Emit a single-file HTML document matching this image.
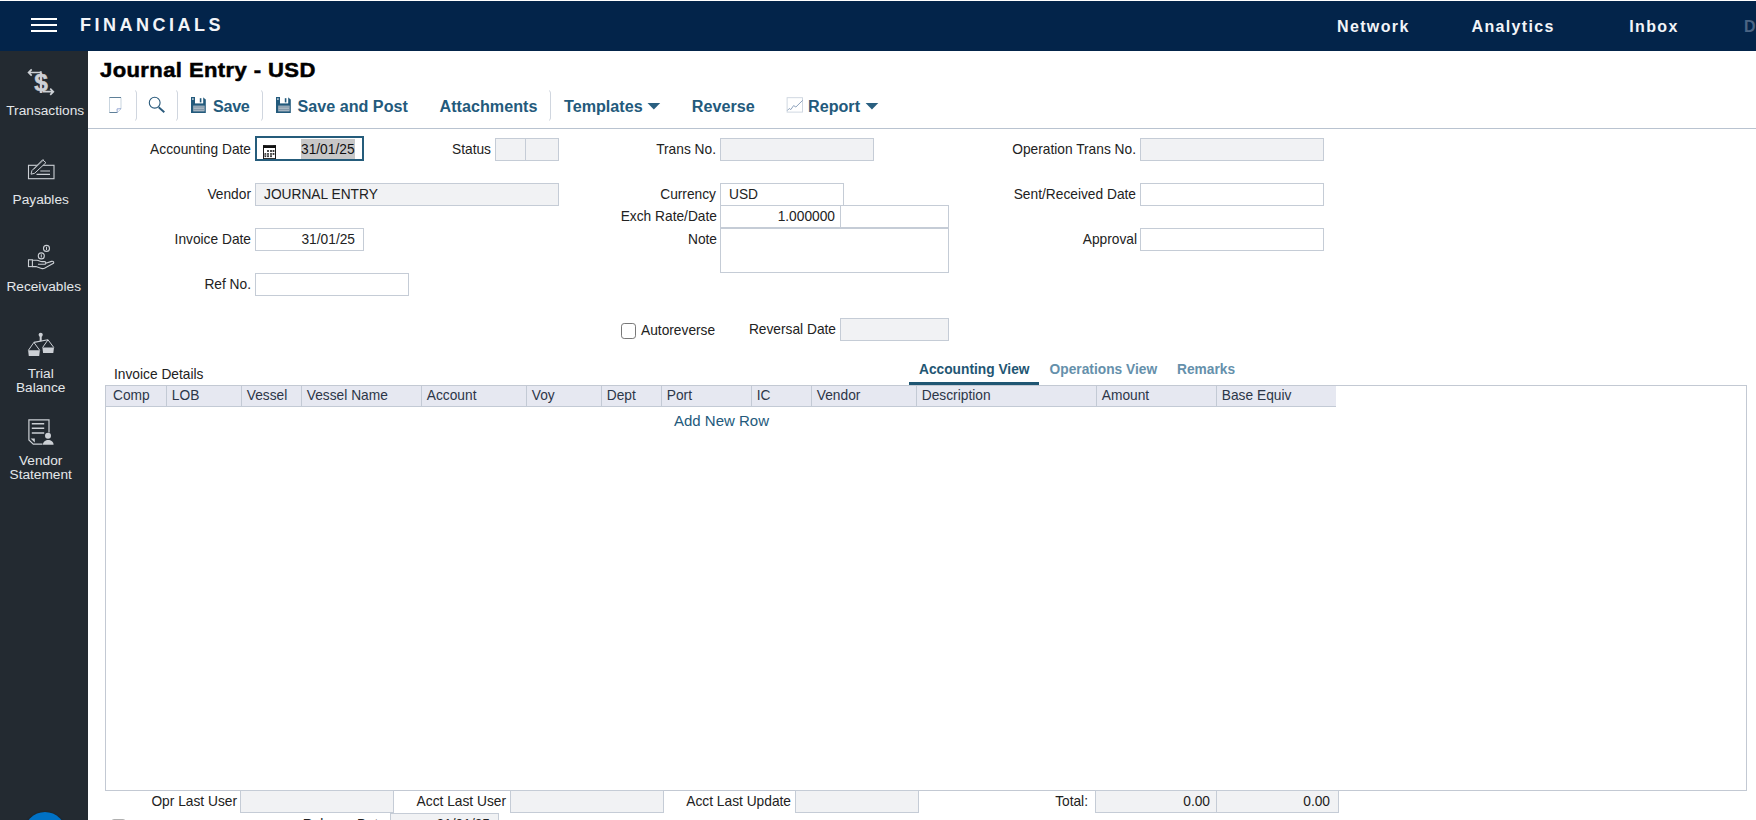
<!DOCTYPE html>
<html>
<head>
<meta charset="utf-8">
<title>Journal Entry - USD</title>
<style>
*{box-sizing:border-box;margin:0;padding:0}
html,body{width:1756px;height:820px;overflow:hidden;background:#fff}
body{font-family:"Liberation Sans",sans-serif;font-size:14px;color:#222;position:relative}
.abs{position:absolute}
#topbar{position:absolute;left:0;top:1px;width:1756px;height:50px;background:#03244a}
#side{position:absolute;left:0;top:51px;width:88px;height:769px;background:#232a31}
.ham{position:absolute;left:31px;width:26px;height:2px;background:#fff}
#brand{position:absolute;left:80px;top:14px;color:#f2f4f8;font-weight:bold;font-size:18px;letter-spacing:3.5px;line-height:20px}
.nav{position:absolute;top:16px;color:#f2f4f8;font-weight:bold;font-size:16px;letter-spacing:1.36px;line-height:20px}
.sl{position:absolute;left:0;width:88px;text-align:center;color:#e4e7ea;font-size:13.7px;line-height:14px}
#title{position:absolute;left:100px;top:56.6px;font-weight:bold;font-size:20px;line-height:26px;color:#000;letter-spacing:.36px;-webkit-text-stroke:.5px #000;transform:scaleX(1.102);transform-origin:0 0;white-space:nowrap}
.tb{position:absolute;top:96.2px;font-weight:bold;font-size:16.15px;line-height:20px;color:#235a7c;white-space:nowrap}
.sep{position:absolute;top:91px;width:1px;height:29px;background:#d4d9e0}
#tbline{position:absolute;left:88px;top:128px;width:1668px;height:1px;background:#b9c3d0}
.lbl{position:absolute;text-align:right;font-size:13.75px;line-height:23.6px;color:#222;white-space:nowrap}
.inp{position:absolute;height:23px;border:1px solid #c5ccd6;background:#fff;font-size:13.75px;line-height:21.6px;color:#222;white-space:nowrap;overflow:hidden}
.ro{background:#f1f2f4}
.th{position:absolute;top:386px;height:20px;font-size:13.75px;line-height:19.8px;color:#2c3648;padding-left:4.8px;border-left:1px solid #c3cad5;white-space:nowrap}
.tab{top:359.8px;font-weight:bold;font-size:13.75px;line-height:20px;color:#6590ab;white-space:nowrap}
</style>
</head>
<body>
<div id="topbar">
  <div class="ham" style="top:17px"></div>
  <div class="ham" style="top:23px"></div>
  <div class="ham" style="top:29px"></div>
  <div id="brand">FINANCIALS</div>
  <div class="nav" style="left:1337px">Network</div>
  <div class="nav" style="left:1471.5px">Analytics</div>
  <div class="nav" style="left:1629.3px">Inbox</div>
  <div class="nav" style="left:1744px;color:#4b6484">D</div>
</div>
<div id="side">
  <div class="sl" style="top:53.2px;left:1.2px">Transactions</div>
  <div class="sl" style="top:141.6px;left:-3.3px">Payables</div>
  <div class="sl" style="top:228.6px;left:-0.3px">Receivables</div>
  <div class="sl" style="top:316.2px;left:-3.3px">Trial<br>Balance</div>
  <div class="sl" style="top:403.2px;left:-3.3px">Vendor<br>Statement</div>
</div>

<!-- sidebar icons -->
<svg class="abs" style="left:0;top:51px" width="88" height="460" viewBox="0 51 88 460" fill="none" stroke="#ccd0d5" stroke-width="1.2">
  <!-- transactions -->
  <text x="41" y="90.6" font-family="Liberation Sans, sans-serif" font-weight="bold" font-size="24.5" text-anchor="middle" fill="#ccd0d5" stroke="#ccd0d5" stroke-width=".5">$</text>
  <rect x="39.8" y="71.2" width="1.9" height="21.8" fill="#ccd0d5" stroke="none"/>
  <path d="M28.6 72.5H40M31.7 69.4L28.6 72.5L31.7 75.6" stroke-width="1.7"/>
  <path d="M42.5 91.7H53.3M50.2 88.6L53.3 91.7L50.2 94.8" stroke-width="1.7"/>
  <!-- payables -->
  <rect x="28.5" y="165.3" width="25.5" height="13.4" stroke-width="1.1"/>
  <path d="M40.3 171H50M36.5 174.4H50" stroke-width="1.1"/>
  <path d="M31 174.2L31.9 170.6L42.6 159.8L45.9 162.7L34.6 173.3Z" fill="#232a31" stroke-width="1"/>
  <path d="M33.6 169.4L43.9 159.6" stroke-width=".8"/>
  <!-- receivables -->
  <circle cx="46.5" cy="248.4" r="3.0" stroke-width="1.1"/>
  <circle cx="41.3" cy="255.9" r="3.0" stroke-width="1.1"/>
  <path d="M46.5 246.8V250M41.3 254.3V257.5" stroke-width="1"/>
  <rect x="28.5" y="259.8" width="3.9" height="6.8" stroke-width="1.1"/>
  <path d="M32.4 260.3H37C39 260.3 40 261.6 42 261.6H44.5C46.3 261.6 46.3 264.2 44.5 264.2H38M45.8 263.3L51.5 261.4C53.3 260.9 54.6 262.6 53 263.6L44.5 268.2C43.5 268.7 42.5 268.7 41.5 268.4L36 266.6H32.4" stroke-width="1.1"/>
  <!-- trial balance -->
  <circle cx="40.7" cy="334.8" r="2.1" fill="#ccd0d5" stroke="none"/>
  <path d="M40.7 336V341.2" stroke-width="2"/>
  <path d="M33.9 342.4L48 339.8" stroke-width="1.1"/>
  <path d="M28.4 350.3L33.9 342.4L39.7 350.3M42.6 347.5L48 339.8L53.8 347.5" stroke-width="1"/>
  <path d="M28.1 350.3H39.9L39.2 355.9H28.8ZM42.4 347.5H54L53.3 352.9H43.1Z" fill="#ccd0d5" stroke="none"/>
  <!-- vendor statement -->
  <path d="M49 432.6V419.9H28.9V439.9L33.3 444.2H42.5" stroke-width="1.2"/>
  <path d="M31.8 423.7H44.2M31.8 428.3H44.2M31.8 433H44.2" stroke-width="1.6"/>
  <path d="M30.6 438.4H34.8V442.6Z" fill="#ccd0d5" stroke="none"/>
  <circle cx="48" cy="435.7" r="3" fill="#ccd0d5" stroke="none"/>
  <path d="M42.9 444.7C42.9 438.3 53.6 438.3 53.6 444.7Z" fill="#ccd0d5" stroke="none"/>
</svg>
<div id="title">Journal Entry - USD</div>

<div id="toolbar">
  <svg class="abs" style="left:88px;top:88px" width="500" height="36" viewBox="88 88 500 36" fill="none"><path d="M135 90.6Q136.5 91 136.5 93V118Q136.5 120 135 120.4M176 90.6Q177.5 91 177.5 93V118Q177.5 120 176 120.4M261 90.6Q262.5 91 262.5 93V118Q262.5 120 261 120.4M549 90.6Q550.5 91 550.5 93V118Q550.5 120 549 120.4" stroke="#d0d6df" stroke-width="1"/></svg>
  <!-- new doc -->
  <svg class="abs" style="left:108px;top:96px" width="16" height="18" viewBox="108 96 16 18" fill="none">
    <path d="M109.5 97.5H121V109L117.3 112.5H109.5Z" stroke="#c9d5df" stroke-width="1"/>
    <path d="M109.5 97.5H121M109.5 112.5H117.3" stroke="#5f8098" stroke-width="1"/>
    <path d="M121 108.7L117 108.9L117.3 112.5" stroke="#8c9fcf" stroke-width=".9"/>
  </svg>
  <!-- search -->
  <svg class="abs" style="left:147px;top:95px" width="20" height="20" viewBox="147 95 20 20" fill="none" stroke="#2a5a7c">
    <circle cx="154.7" cy="102.7" r="5.4" stroke-width="1.1"/>
    <path d="M158.7 107.2L164.3 112.2" stroke-width="1.9"/>
  </svg>
  <!-- save icons -->
  <svg class="abs" style="left:190px;top:96px" width="17" height="18" viewBox="0 0 17 18">
    <path d="M1 1H12.6L15.8 3.6V17H1Z" fill="#235a7c"/>
    <rect x="5" y="0.8" width="8.2" height="6.6" fill="#fff"/>
    <rect x="9.8" y="2.2" width="1.6" height="4.2" fill="#235a7c"/>
    <rect x="2.2" y="2.2" width="1.4" height="1.8" fill="#c9d6e0"/>
    <rect x="3.2" y="9.6" width="11.4" height="5.8" fill="#a9b7c3"/>
    <path d="M3.2 11H14.6M3.2 13.6H14.6" stroke="#7f95a6" stroke-width="1"/>
  </svg>
  <svg class="abs" style="left:274.6px;top:96px" width="17" height="18" viewBox="0 0 17 18">
    <path d="M1 1H12.6L15.8 3.6V17H1Z" fill="#235a7c"/>
    <rect x="5" y="0.8" width="8.2" height="6.6" fill="#fff"/>
    <rect x="9.8" y="2.2" width="1.6" height="4.2" fill="#235a7c"/>
    <rect x="2.2" y="2.2" width="1.4" height="1.8" fill="#c9d6e0"/>
    <rect x="3.2" y="9.6" width="11.4" height="5.8" fill="#a9b7c3"/>
    <path d="M3.2 11H14.6M3.2 13.6H14.6" stroke="#7f95a6" stroke-width="1"/>
  </svg>
  <!-- dropdown arrows -->
  <svg class="abs" style="left:647px;top:103px" width="14" height="7" viewBox="0 0 14 7"><path d="M0.5 0H13.2L6.85 6.6Z" fill="#2a5f80"/></svg>
  <svg class="abs" style="left:865px;top:103px" width="14" height="7" viewBox="0 0 14 7"><path d="M0.6 0H13.3L6.95 6.6Z" fill="#2a5f80"/></svg>
  <!-- report icon -->
  <svg class="abs" style="left:786px;top:96px" width="18" height="18" viewBox="786 96 18 18" fill="none">
    <rect x="787.1" y="97.7" width="15.4" height="14.4" stroke="#cbd3de" stroke-width=".9"/>
    <path d="M787.3 110.5L789.3 108.5L790.8 109.6L793.6 105.6L795.9 107L802.7 100.3" stroke="#8299b6" stroke-width=".9"/>
  </svg>
  <div class="tb" style="left:213px;letter-spacing:-.3px">Save</div>
  <div class="tb" style="left:297.5px">Save and Post</div>
  <div class="tb" style="left:439.6px">Attachments</div>
  <div class="tb" style="left:564px">Templates</div>
  <div class="tb" style="left:691.8px">Reverse</div>
  <div class="tb" style="left:808px">Report</div>
</div>
<div id="tbline"></div>

<div id="form">
  <!-- row 1 -->
  <div class="lbl" style="left:100px;width:151px;top:138px">Accounting Date</div>
  <div class="abs" style="left:255px;top:136px;width:109px;height:25px;border:2px solid #255c7b;background:#fff"></div>
  <div class="abs" style="left:301px;top:139px;width:54px;height:20px;background:#c8c8c8"></div>
  <div class="abs" style="left:301px;top:138px;width:54px;height:23px;line-height:23.6px;font-size:13.75px;color:#111">31/01/25</div>
  <svg class="abs" style="left:263px;top:145px" width="13" height="14" viewBox="0 0 13 14"><rect x="0.5" y="0.6" width="12" height="13" fill="#fff" stroke="#1a1a1a" stroke-width="1"/><path d="M0 0.4H2.3L3.3 1.1H9.6L10.6 0.4H13V3H0Z" fill="#111"/><g fill="#222"><rect x="4.1" y="5.1" width="1.8" height="1.8"/><rect x="7.1" y="5.1" width="1.8" height="1.8"/><rect x="9.6" y="5.1" width="1.8" height="1.8"/><rect x="9.6" y="8.1" width="1.8" height="1.7"/></g><g fill="#333"><rect x="1.5" y="8.1" width="1.7" height="4"/><rect x="4.1" y="8.1" width="1.8" height="4"/><rect x="7.1" y="8.1" width="1.8" height="4"/></g><g fill="#9a9a9a"><rect x="1.5" y="9.6" width="1.7" height="1"/><rect x="4.1" y="9.6" width="1.8" height="1"/><rect x="7.1" y="9.6" width="1.8" height="1"/></g></svg>
  <div class="lbl" style="left:400px;width:91px;top:138px">Status</div>
  <div class="inp ro" style="left:495px;top:138px;width:31px"></div>
  <div class="inp ro" style="left:525px;top:138px;width:34px"></div>
  <div class="lbl" style="left:600px;width:116px;top:138px">Trans No.</div>
  <div class="inp ro" style="left:720px;top:138px;width:154px"></div>
  <div class="lbl" style="left:980px;width:156px;top:138px">Operation Trans No.</div>
  <div class="inp ro" style="left:1140px;top:138px;width:184px"></div>
  <!-- row 2 -->
  <div class="lbl" style="left:100px;width:151px;top:183px">Vendor</div>
  <div class="inp ro" style="left:255px;top:183px;width:304px;padding-left:8px">JOURNAL ENTRY</div>
  <div class="lbl" style="left:600px;width:116px;top:183px">Currency</div>
  <div class="inp" style="left:720px;top:183px;width:124px;padding-left:8px">USD</div>
  <div class="lbl" style="left:980px;width:156px;top:183px">Sent/Received Date</div>
  <div class="inp" style="left:1140px;top:183px;width:184px"></div>
  <div class="lbl" style="left:600px;width:117px;top:205px">Exch Rate/Date</div>
  <div class="inp" style="left:720px;top:205px;width:121px;text-align:right;padding-right:5px">1.000000</div>
  <div class="inp" style="left:840px;top:205px;width:109px"></div>
  <!-- row 3 -->
  <div class="lbl" style="left:100px;width:151px;top:228px">Invoice Date</div>
  <div class="inp" style="left:255px;top:228px;width:109px;text-align:right;padding-right:8px">31/01/25</div>
  <div class="lbl" style="left:600px;width:117px;top:228px">Note</div>
  <div class="inp" style="left:720px;top:228px;width:229px;height:45px"></div>
  <div class="lbl" style="left:980px;width:157px;top:228px">Approval</div>
  <div class="inp" style="left:1140px;top:228px;width:184px"></div>
  <!-- row 4 -->
  <div class="lbl" style="left:100px;width:151px;top:273px">Ref No.</div>
  <div class="inp" style="left:255px;top:273px;width:154px"></div>
  <!-- row 5 -->
  <div class="abs" style="left:621px;top:323.2px;width:15.1px;height:15.6px;border:1.5px solid #787878;border-radius:3.2px;background:#fff"></div>
  <div class="lbl" style="left:641px;top:319px;text-align:left">Autoreverse</div>
  <div class="lbl" style="left:700px;width:136px;top:318px">Reversal Date</div>
  <div class="inp ro" style="left:840px;top:318px;width:109px"></div>
</div>
<div id="grid">
  <div class="abs" style="left:114px;top:364.1px;font-size:13.75px;line-height:22px;color:#222;white-space:nowrap">Invoice Details</div>
  <div class="abs tab" style="left:919px;color:#1f5673">Accounting View</div>
  <div class="abs tab" style="left:1049.6px">Operations View</div>
  <div class="abs tab" style="left:1177px">Remarks</div>
  <div class="abs" style="left:909px;top:382px;width:130px;height:3px;background:#1f5673"></div>
  <div class="abs" style="left:105px;top:385px;width:1642px;height:406px;border:1px solid #c3c9d3;background:#fff"></div>
  <div class="abs" style="left:106px;top:386px;width:1230px;height:21px;background:#e6e8f1;border-bottom:1px solid #c3cad5"></div>
  <div class="th" style="left:106px;border-left:0;padding-left:7px">Comp</div>
  <div class="th" style="left:166px">LOB</div>
  <div class="th" style="left:241px">Vessel</div>
  <div class="th" style="left:301px">Vessel Name</div>
  <div class="th" style="left:421px">Account</div>
  <div class="th" style="left:526px">Voy</div>
  <div class="th" style="left:601px">Dept</div>
  <div class="th" style="left:661px">Port</div>
  <div class="th" style="left:751px">IC</div>
  <div class="th" style="left:811px">Vendor</div>
  <div class="th" style="left:916px">Description</div>
  <div class="th" style="left:1096px">Amount</div>
  <div class="th" style="left:1216px">Base Equiv</div>
  <div class="abs" style="left:674px;top:410px;font-size:15px;line-height:22px;color:#235a7c">Add New Row</div>
</div>
<div id="foot">
  <div class="lbl" style="left:105px;width:132px;top:790px">Opr Last User</div>
  <div class="inp ro" style="left:240px;top:790px;width:154px"></div>
  <div class="lbl" style="left:395px;width:111px;top:790px">Acct Last User</div>
  <div class="inp ro" style="left:510px;top:790px;width:154px"></div>
  <div class="lbl" style="left:665px;width:126px;top:790px">Acct Last Update</div>
  <div class="inp ro" style="left:795px;top:790px;width:124px"></div>
  <div class="lbl" style="left:1000px;width:88px;top:790px">Total:</div>
  <div class="inp ro" style="left:1095px;top:790px;width:122px;text-align:right;padding-right:6px">0.00</div>
  <div class="inp ro" style="left:1216px;top:790px;width:123px;text-align:right;padding-right:8px">0.00</div>
  <div class="lbl" style="left:250px;width:136px;top:812.7px">Release Date</div>
  <div class="inp ro" style="left:390px;top:813.4px;width:109px;text-align:right;padding-right:8px">31/01/25</div>
  <div class="abs" style="left:111px;top:818.6px;width:15.1px;height:15.6px;border:1.5px solid #b0b0b0;border-radius:3px;background:#f4f4f4"></div>
  <div class="abs" style="left:24.1px;top:812.2px;width:42px;height:42px;border-radius:50%;background:#0071c5;box-shadow:0 0 1.5px rgba(0,0,0,.5)"></div>
</div>
</body>
</html>
